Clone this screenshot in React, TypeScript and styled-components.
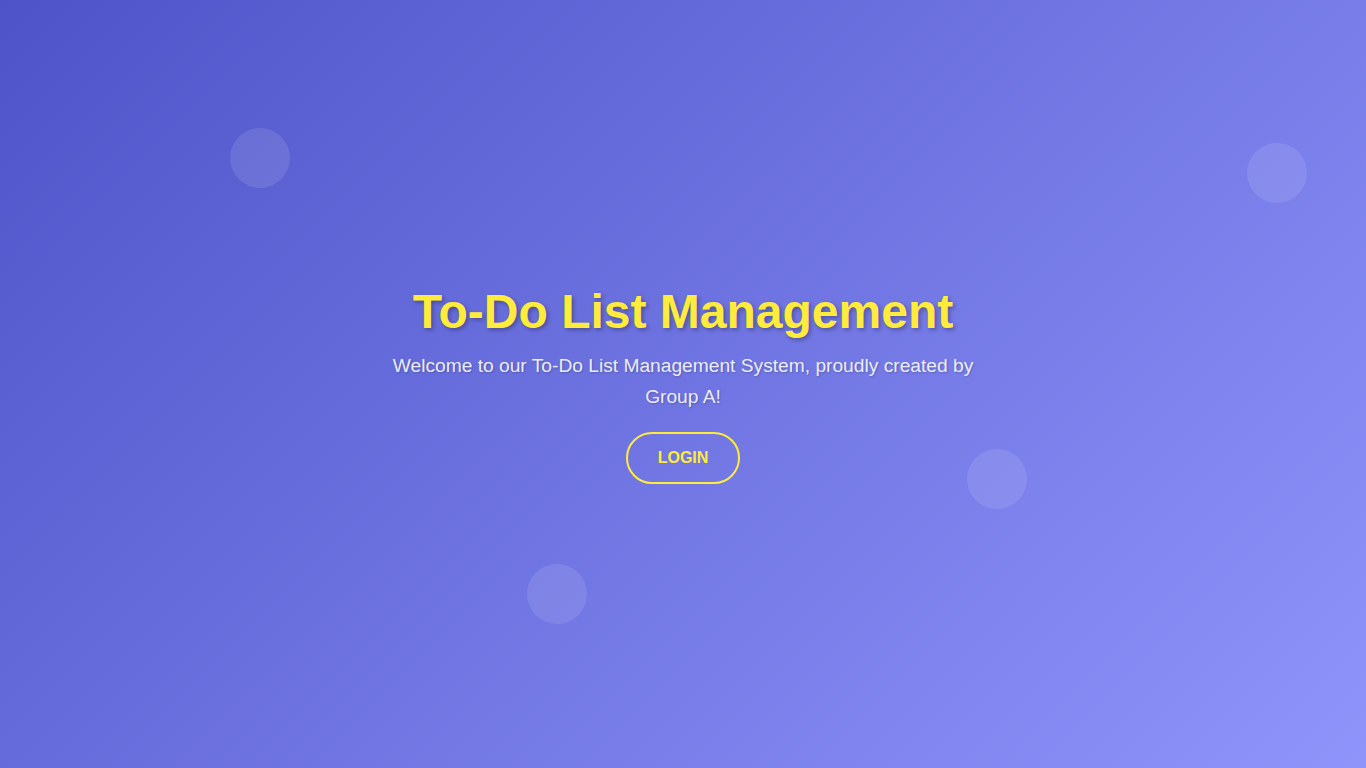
import * as React from "react";
import styled, { createGlobalStyle } from "styled-components";

const GlobalStyle = createGlobalStyle`
  html, body {
    margin: 0;
    padding: 0;
  }
  body {
    font-family: "Liberation Sans", Arial, sans-serif;
  }
`;

const Page = styled.div`
  position: relative;
  width: 100%;
  height: 100vh;
  overflow: hidden;
  background: linear-gradient(135deg, #4e54c8, #8f94fb);
  display: flex;
  align-items: center;
  justify-content: center;
`;

const Bubble = styled.div<{ $x: number; $y: number }>`
  position: absolute;
  left: ${(p) => p.$x - 30}px;
  top: ${(p) => p.$y - 30}px;
  width: 60px;
  height: 60px;
  border-radius: 50%;
  background: rgba(255, 255, 255, 0.1);
`;

const Hero = styled.div`
  position: relative;
  z-index: 1;
  max-width: 600px;
  padding: 20px;
  text-align: center;
  display: flex;
  flex-direction: column;
  align-items: center;
`;

const Title = styled.h1`
  margin: 0 0 12px;
  font-size: 48px;
  font-weight: bold;
  color: #ffeb3b;
  text-shadow: 2px 2px 4px rgba(0, 0, 0, 0.3);
`;

const Lead = styled.p`
  margin: 0 0 20px;
  font-size: 19.2px;
  line-height: 1.6;
  color: rgba(255, 255, 255, 0.9);
  text-shadow: 1px 1px 2px rgba(0, 0, 0, 0.2);
`;

const LoginButton = styled.button`
  font-family: inherit;
  font-size: 16px;
  font-weight: bold;
  color: #ffeb3b;
  background: transparent;
  border: 2px solid #ffeb3b;
  border-radius: 30px;
  padding: 15px 30px;
  cursor: pointer;
  text-transform: uppercase;
`;

const bubbles = [
  { x: 260, y: 158 },
  { x: 1277, y: 173 },
  { x: 997, y: 479 },
  { x: 557, y: 594 },
];

export default function App() {
  return (
    <>
      <GlobalStyle />
      <Page>
        {bubbles.map((b, i) => (
          <Bubble key={i} $x={b.x} $y={b.y} />
        ))}
        <Hero>
          <Title>To-Do List Management</Title>
          <Lead>
            Welcome to our To-Do List Management System, proudly created by
            Group A!
          </Lead>
          <LoginButton>Login</LoginButton>
        </Hero>
      </Page>
    </>
  );
}
